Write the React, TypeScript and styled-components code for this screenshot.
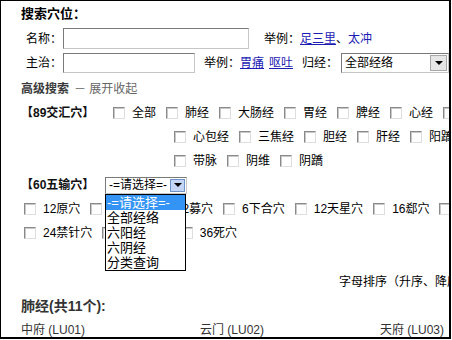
import React from 'react';
import styled, { createGlobalStyle } from 'styled-components';

const Global = createGlobalStyle`
  html, body { margin: 0; padding: 0; background: #fff; }
  body { font-family: "Liberation Sans", "Noto Sans CJK SC", sans-serif; }
`;

const Frame = styled.div`
  position: relative;
  width: 451px;
  height: 339px;
  box-sizing: border-box;
  border: 1px solid #000;
  border-right-width: 2px;
  border-bottom-width: 2px;
  overflow: hidden;
  font-size: 12px;
  line-height: 16px;
  color: #000;
`;

const Content = styled.div`
  width: 560px;
  padding-left: 20px;
`;

const Row = styled.div<{ $h: number; $indent?: number }>`
  display: flex;
  align-items: center;
  height: ${p => p.$h}px;
  padding-left: ${p => p.$indent ?? 0}px;
  white-space: nowrap;
`;

const Title = styled.span`
  font-size: 13px;
  font-weight: bold;
`;

const FieldLabel = styled.span`
  width: 42px;
  text-align: left;
  padding-left: 5px;
  box-sizing: border-box;
`;

const TextInput = styled.div<{ $w: number; $h: number }>`
  width: ${p => p.$w}px;
  height: ${p => p.$h}px;
  box-sizing: border-box;
  border: 1px solid;
  border-color: #7a7a7a #c6c6c6 #c6c6c6 #7a7a7a;
  background: #fff;
`;

const Hint = styled.span<{ $ml: number }>`
  margin-left: ${p => p.$ml}px;
`;

const Link = styled.a<{ $plain?: boolean; $mr?: number }>`
  color: #1c1cb4;
  text-decoration: ${p => (p.$plain ? 'none' : 'underline')};
  margin-right: ${p => p.$mr ?? 0}px;
  cursor: pointer;
`;

const SelectWrap = styled.div<{ $ml: number }>`
  position: relative;
  margin-left: ${p => p.$ml}px;
`;

const SelectBox = styled.div<{ $w: number; $h: number }>`
  display: flex;
  align-items: center;
  justify-content: space-between;
  width: ${p => p.$w}px;
  height: ${p => p.$h}px;
  box-sizing: border-box;
  border: 1px solid;
  border-color: #7a7a7a #c6c6c6 #c6c6c6 #7a7a7a;
  background: #fff;
  padding-left: 3px;
`;

const ArrowBtn = styled.span<{ $active?: boolean; $w: number }>`
  display: flex;
  align-items: center;
  justify-content: center;
  width: ${p => p.$w}px;
  align-self: stretch;
  margin: 1px;
  box-sizing: border-box;
  border: 1px solid ${p => (p.$active ? '#6f93c9' : '#a8a8a8')};
  background: ${p => (p.$active ? '#c5d5f5' : '#e6e6e6')};
`;

const Tri = styled.span`
  width: 0;
  height: 0;
  border-left: 4px solid transparent;
  border-right: 4px solid transparent;
  border-top: 4px solid #000;
`;

const DropList = styled.ul`
  position: absolute;
  left: 0;
  top: 100%;
  z-index: 5;
  width: 81px;
  margin: 0;
  padding: 0;
  list-style: none;
  box-sizing: border-box;
  border: 1px solid #000;
  background: #fff;
`;

const DropItem = styled.li<{ $sel?: boolean }>`
  height: 15px;
  line-height: 15px;
  padding-left: 1px;
  font-size: 13px;
  background: ${p => (p.$sel ? '#3394f5' : '#fff')};
  color: ${p => (p.$sel ? '#fff' : '#000')};
`;

const Advanced = styled.span`
  color: #3a3a3a;
  font-weight: bold;
`;

const Toggle = styled.span`
  color: #666;
  margin-left: 5px;
`;

const GroupLabel = styled.span<{ $w: number }>`
  width: ${p => p.$w}px;
  font-weight: bold;
  color: #111;
`;

const Item = styled.label`
  display: inline-flex;
  align-items: center;
  margin-right: 10px;
`;

const Box = styled.span`
  width: 12px;
  height: 12px;
  box-sizing: border-box;
  margin-right: 7px;
  border: 1px solid;
  border-color: #8a8a8a #dedede #dedede #8a8a8a;
  box-shadow: inset 1px 1px 0 #c8c8c8;
  background: #fff;
`;

const Sort = styled.span`
  color: #000;
`;

const Section = styled.span`
  font-size: 14px;
  font-weight: bold;
  color: #333;
`;

const PointGrid = styled.div`
  display: grid;
  grid-template-columns: 179px 180px 180px;
  align-items: center;
  height: 24px;
  color: #333;
`;

const Point = styled.span`
  white-space: nowrap;
`;

const Check = ({ label }: { label: string }) => (
  <Item>
    <Box />
    {label}
  </Item>
);

export default function App() {
  return (
    <>
      <Global />
      <Frame>
        <Content>
          <Row $h={26}>
            <Title>搜索穴位：</Title>
          </Row>
          <Row $h={23}>
            <FieldLabel>名称：</FieldLabel>
            <TextInput $w={186} $h={21} />
            <Hint $ml={15}>举例：</Hint>
            <Link>足三里</Link>
            <span>、</span>
            <Link $plain>太冲</Link>
          </Row>
          <Row $h={26}>
            <FieldLabel>主治：</FieldLabel>
            <TextInput $w={132} $h={20} />
            <Hint $ml={9}>举例：</Hint>
            <Link $mr={5}>胃痛</Link>
            <Link>呕吐</Link>
            <Hint $ml={9}>归经：</Hint>
            <SelectWrap $ml={3}>
              <SelectBox $w={108} $h={20}>
                全部经络
                <ArrowBtn $w={17}>
                  <Tri />
                </ArrowBtn>
              </SelectBox>
            </SelectWrap>
          </Row>
          <Row $h={25}>
            <Advanced>高级搜索</Advanced>
            <Toggle>－ 展开收起</Toggle>
          </Row>
          <Row $h={24}>
            <GroupLabel $w={92}>【89交汇穴】</GroupLabel>
            {['全部', '肺经', '大肠经', '胃经', '脾经', '心经', '小肠经'].map(l => (
              <Check key={l} label={l} />
            ))}
          </Row>
          <Row $h={24} $indent={153}>
            {['心包经', '三焦经', '胆经', '肝经', '阳蹻'].map(l => (
              <Check key={l} label={l} />
            ))}
          </Row>
          <Row $h={24} $indent={153}>
            {['带脉', '阴维', '阴蹻'].map(l => (
              <Check key={l} label={l} />
            ))}
          </Row>
          <Row $h={24}>
            <GroupLabel $w={84}>【60五输穴】</GroupLabel>
            <SelectWrap $ml={0}>
              <SelectBox $w={82} $h={17}>
                -=请选择=-
                <ArrowBtn $w={15} $active>
                  <Tri />
                </ArrowBtn>
              </SelectBox>
              <DropList>
                <DropItem $sel>-=请选择=-</DropItem>
                <DropItem>全部经络</DropItem>
                <DropItem>六阳经</DropItem>
                <DropItem>六阴经</DropItem>
                <DropItem>分类查询</DropItem>
              </DropList>
            </SelectWrap>
          </Row>
          <Row $h={24} $indent={3}>
            {['12原穴', '15络穴', '12募穴', '6下合穴', '12天星穴', '16郄穴', '8会穴'].map(l => (
              <Check key={l} label={l} />
            ))}
          </Row>
          <Row $h={24} $indent={3}>
            {['24禁针穴', '12井荥穴', '36死穴'].map(l => (
              <Check key={l} label={l} />
            ))}
          </Row>
          <Row $h={25} />
          <Row $h={24} $indent={318}>
            <Sort>字母排序（升序、降序）</Sort>
          </Row>
          <Row $h={24}>
            <Section>肺经(共11个):</Section>
          </Row>
          <PointGrid>
            <Point>中府 (LU01)</Point>
            <Point>云门 (LU02)</Point>
            <Point>天府 (LU03)</Point>
          </PointGrid>
        </Content>
      </Frame>
    </>
  );
}
